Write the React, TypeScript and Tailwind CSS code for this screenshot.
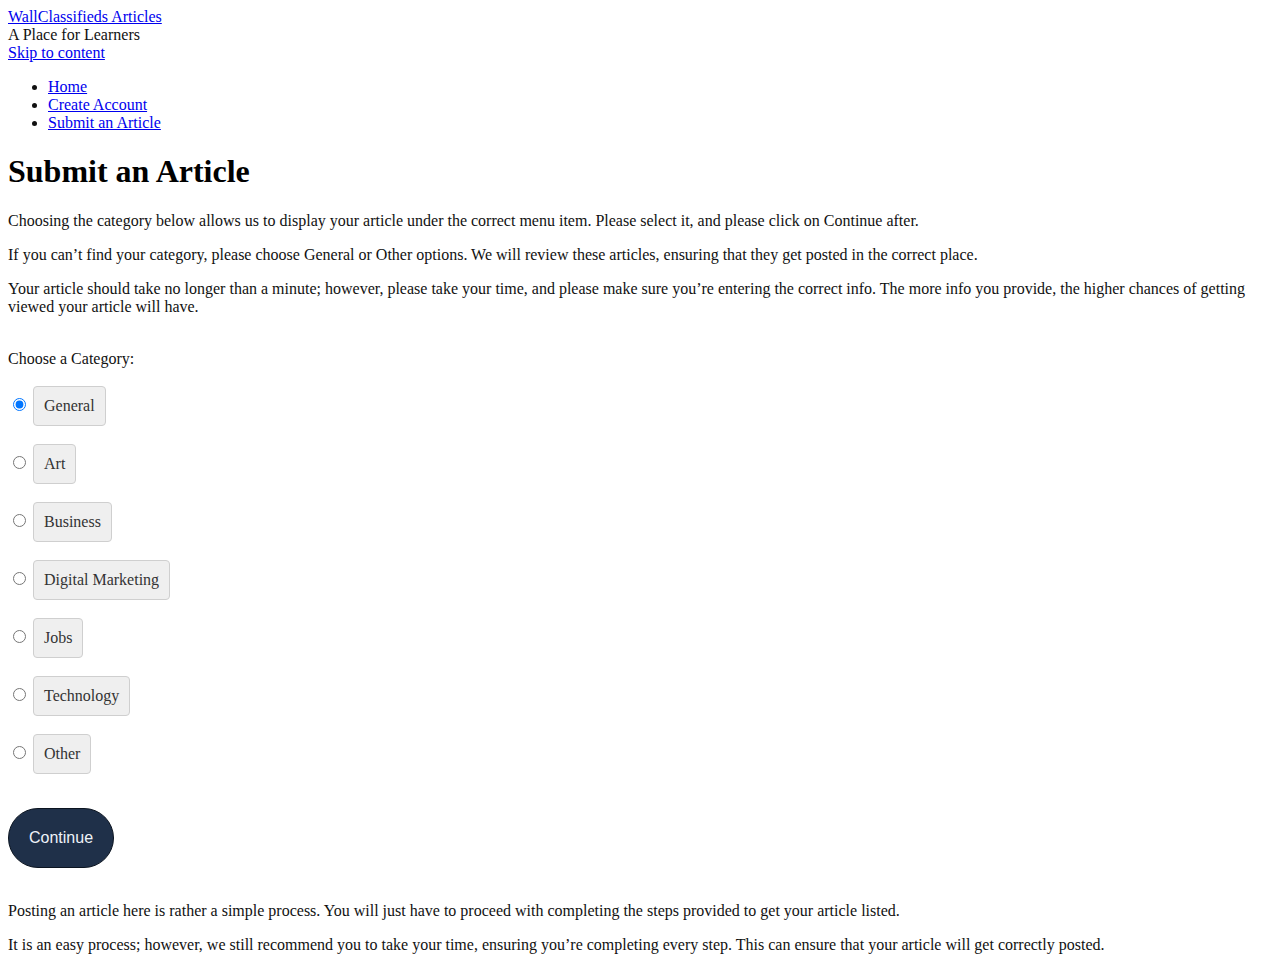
import { useState } from "react"

const categories = ["General", "Art", "Business", "Digital Marketing", "Jobs", "Technology", "Other"]

export default function App() {
  const [selected, setSelected] = useState("General")

  return (
    <div className="bg-white min-h-screen p-2 font-['Liberation_Serif',serif] text-base leading-[18px] text-[#111]">
      <header>
        <a href="#" className="block text-[#0000ee] underline">WallClassifieds Articles</a>
        <div>A Place for Learners</div>
        <a href="#" className="block text-[#0000ee] underline">Skip to content</a>
        <ul className="list-disc pl-10 my-4">
          <li><a href="#" className="text-[#0000ee] underline">Home</a></li>
          <li><a href="#" className="text-[#0000ee] underline">Create Account</a></li>
          <li><a href="#" className="text-[#0000ee] underline">Submit an Article</a></li>
        </ul>
      </header>

      <main>
        <h1 className="text-[32px] leading-[37px] font-bold mt-[21px] mb-[22px] text-black">Submit an Article</h1>
        <p className="my-4">
          Choosing the category below allows us to display your article under the correct menu item. Please select it, and please click on Continue after.
        </p>
        <p className="my-4">
          If you can’t find your category, please choose General or Other options. We will review these articles, ensuring that they get posted in the correct place.
        </p>
        <p className="my-4">
          Your article should take no longer than a minute; however, please take your time, and please make sure you’re entering the correct info. The more info you provide, the higher chances of getting viewed your article will have.
        </p>

        <form className="mt-[34px]" onSubmit={(e) => e.preventDefault()}>
          <div className="mb-[18px]">Choose a Category:</div>
          <div className="flex flex-col gap-[18px]">
            {categories.map((c) => (
              <div key={c} className="flex items-start">
                <input
                  type="radio"
                  name="category"
                  id={`cat-${c}`}
                  checked={selected === c}
                  onChange={() => setSelected(c)}
                  className="w-[13px] h-[13px] mt-3 ml-[5px] mr-[7px]"
                />
                <label
                  htmlFor={`cat-${c}`}
                  className="bg-[#efefef] border border-[#cfcfcf] rounded-[4px] px-[10px] py-[10px] text-[#333] cursor-pointer"
                >
                  {c}
                </label>
              </div>
            ))}
          </div>
          <button
            type="submit"
            className="mt-[34px] rounded-full bg-[#1f3049] border border-[#0b1420] px-5 py-5 font-['Liberation_Sans',Arial,sans-serif] text-base leading-[18px] text-[#eef3f8]"
          >
            Continue
          </button>
        </form>

        <p className="mt-[34px] mb-4">
          Posting an article here is rather a simple process. You will just have to proceed with completing the steps provided to get your article listed.
        </p>
        <p className="my-4">
          It is an easy process; however, we still recommend you to take your time, ensuring you’re completing every step. This can ensure that your article will get correctly posted.
        </p>
      </main>
    </div>
  )
}
